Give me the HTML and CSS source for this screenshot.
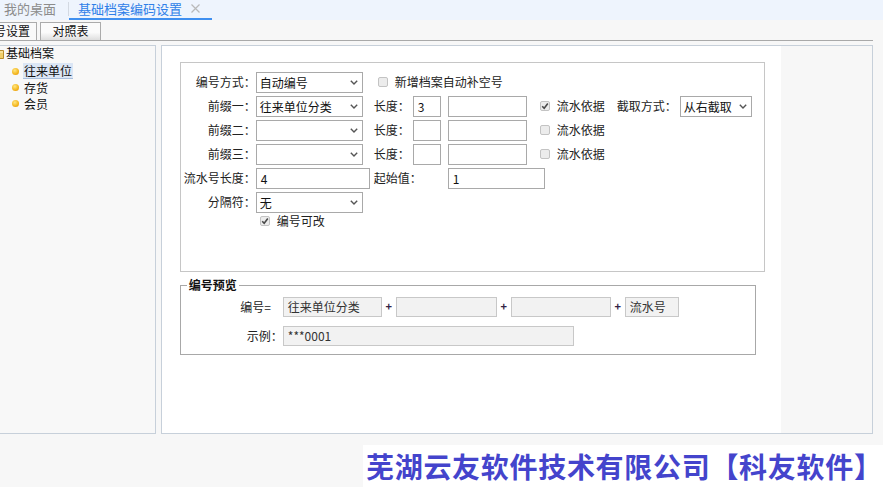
FILE: index.html
```html
<!DOCTYPE html>
<html lang="zh-CN">
<head>
<meta charset="utf-8">
<title>基础档案编码设置</title>
<link rel="stylesheet" href="styles.css">
</head>
<body>
<header class="topbar">
  <div class="tab-home">我的桌面</div>
  <div class="tab-sep"></div>
  <div class="tab-active">
    <span>基础档案编码设置</span>
    <svg class="close" width="9" height="9" viewBox="0 0 9 9"><path d="M0.5 0.5L8.5 8.5M8.5 0.5L0.5 8.5" stroke="#b9b9b9" stroke-width="1.2" fill="none"/></svg>
  </div>
</header>

<div class="app">
  <nav class="subtabs">
    <div class="subtab current">编号设置</div>
    <div class="subtab">对照表</div>
  </nav>

  <div class="main">
    <aside class="tree">
      <div class="node root">
        <svg width="14" height="12" viewBox="0 0 14 12"><path d="M0.5 2.5V11.5H13.5V3.5H6.5L5 1.5H1.5Z" fill="#f1cf6a" stroke="#b88d2c"/><path d="M1 5H13" stroke="#fff3c4"/></svg>
        <span>基础档案</span>
      </div>
      <div class="node leaf"><i class="dot"></i><span class="label selected">往来单位</span></div>
      <div class="node leaf"><i class="dot"></i><span class="label">存货</span></div>
      <div class="node leaf"><i class="dot"></i><span class="label">会员</span></div>
    </aside>

    <section class="content">
      <div class="form-area">
        <div class="group">
          <!-- row 1 -->
          <div class="lbl">编号方式：</div>
          <div class="select w107"><span>自动编号</span><svg width="8" height="5" viewBox="0 0 8 5"><path d="M0.8 0.8L4 4L7.2 0.8" stroke="#555" stroke-width="1.4" fill="none"/></svg></div>
          <div class="check span-rest"><span class="cb"></span><span>新增档案自动补空号</span></div>

          <!-- row 2 -->
          <div class="lbl">前缀一：</div>
          <div class="select w107"><span>往来单位分类</span><svg width="8" height="5" viewBox="0 0 8 5"><path d="M0.8 0.8L4 4L7.2 0.8" stroke="#555" stroke-width="1.4" fill="none"/></svg></div>
          <div class="lbl2">长度：</div>
          <div class="field w28">3</div>
          <div class="field w79"></div>
          <div class="check"><span class="cb on"><svg width="8" height="8" viewBox="0 0 8 8"><path d="M1.2 4.2L3.2 6.2L6.8 1.6" stroke="#4a4a4a" stroke-width="1.6" fill="none"/></svg></span><span>流水依据</span></div>
          <div class="lbl3">截取方式：</div>
          <div class="select w72"><span>从右截取</span><svg width="8" height="5" viewBox="0 0 8 5"><path d="M0.8 0.8L4 4L7.2 0.8" stroke="#555" stroke-width="1.4" fill="none"/></svg></div>

          <!-- row 3 -->
          <div class="lbl">前缀二：</div>
          <div class="select w107"><span></span><svg width="8" height="5" viewBox="0 0 8 5"><path d="M0.8 0.8L4 4L7.2 0.8" stroke="#555" stroke-width="1.4" fill="none"/></svg></div>
          <div class="lbl2">长度：</div>
          <div class="field w28"></div>
          <div class="field w79"></div>
          <div class="check span-end"><span class="cb"></span><span>流水依据</span></div>

          <!-- row 4 -->
          <div class="lbl">前缀三：</div>
          <div class="select w107"><span></span><svg width="8" height="5" viewBox="0 0 8 5"><path d="M0.8 0.8L4 4L7.2 0.8" stroke="#555" stroke-width="1.4" fill="none"/></svg></div>
          <div class="lbl2">长度：</div>
          <div class="field w28"></div>
          <div class="field w79"></div>
          <div class="check span-end"><span class="cb"></span><span>流水依据</span></div>

          <!-- row 5 -->
          <div class="lbl">流水号长度：</div>
          <div class="field w114">4</div>
          <div class="lbl2 span2">起始值：</div>
          <div class="field w97 span-end">1</div>

          <!-- row 6 -->
          <div class="lbl">分隔符：</div>
          <div class="select w107 span-end-left"><span>无</span><svg width="8" height="5" viewBox="0 0 8 5"><path d="M0.8 0.8L4 4L7.2 0.8" stroke="#555" stroke-width="1.4" fill="none"/></svg></div>

          <!-- row 7 -->
          <div class="check last"><span class="cb on"><svg width="8" height="8" viewBox="0 0 8 8"><path d="M1.2 4.2L3.2 6.2L6.8 1.6" stroke="#4a4a4a" stroke-width="1.6" fill="none"/></svg></span><span>编号可改</span></div>
        </div>

        <fieldset class="preview">
          <legend>编号预览</legend>
          <div class="prow">
            <div class="plabel eq">编号=</div>
            <div class="pbox w99">往来单位分类</div>
            <div class="plus">+</div>
            <div class="pbox w101"></div>
            <div class="plus">+</div>
            <div class="pbox w100"></div>
            <div class="plus">+</div>
            <div class="pbox w54">流水号</div>
          </div>
          <div class="prow">
            <div class="plabel">示例：</div>
            <div class="pbox w291">***0001</div>
          </div>
        </fieldset>
      </div>
      <div class="content-side"></div>
    </section>
  </div>
</div>

<footer class="footer">
  <div class="banner">芜湖云友软件技术有限公司【科友软件】</div>
</footer>
</body>
</html>
```

FILE: styles.css
```css
* { box-sizing: border-box; }

html, body {
  margin: 0;
  padding: 0;
}

body {
  width: 883px;
  height: 487px;
  overflow: hidden;
  background: #f7f7f7;
  color: #222;
  font-family: "Noto Sans CJK SC", "Noto Sans", sans-serif;
  font-size: 12px;
  line-height: 1.2;
}

/* top tab bar */
.topbar {
  height: 20px;
  background: #eef4fd;
  display: flex;
  align-items: stretch;
  font-size: 13px;
}
.tab-home {
  width: 68px;
  padding-left: 4px;
  line-height: 18px;
  color: #8c8c8c;
}
.tab-sep {
  width: 1px;
  margin: 2px 0 4px;
  background: #d3d9e2;
}
.tab-active {
  display: flex;
  align-items: center;
  gap: 9px;
  padding: 0 12px 0 9px;
  height: 20px;
  border-bottom: 2px solid #3f8ff0;
  color: #2f7fe8;
  line-height: 18px;
}
.tab-active .close { margin-top: -1px; }

/* shifted working area (window scrolled slightly to the right) */
.app {
  margin-left: -25px;
  width: 898px;
}

.subtabs {
  display: flex;
  gap: 3px;
  height: 21px;
  padding-top: 2px;
  border-bottom: 1px solid #a9a9a9;
}
.subtab {
  height: 18px;
  border: 1px solid #ababab;
  border-bottom: none;
  text-align: center;
  line-height: 16px;
  color: #111;
  width: 61px;
  background: linear-gradient(#fbfbfb 55%, #dedede);
}
.subtab.current {
  width: 62px;
  background: #f9f9f9;
}

.main {
  display: flex;
  height: 389px;
  margin-top: 4px;
}

/* tree */
.tree {
  width: 181px;
  height: 100%;
  border: 1px solid #c7d0da;
  background: #f8f8f8;
  color: #111;
}
.node {
  display: flex;
  align-items: center;
  height: 16px;
  white-space: nowrap;
}
.root {
  height: 14px;
  padding-left: 14px;
  gap: 2px;
}
.leaf { padding-left: 36px; }
.root + .leaf { margin-top: 3px; }
.dot {
  width: 7px;
  height: 7px;
  border-radius: 50%;
  background: radial-gradient(circle at 40% 35%, #ffe680, #f3b51c 60%, #e08a0c);
  margin-right: 4px;
}
.label {
  padding: 0 1px;
  line-height: 15px;
}
.label.selected {
  background: #dbe6f5;
  border-bottom: 1px solid #a9bfdc;
}

/* main content */
.content {
  display: flex;
  width: 713px;
  height: 100%;
  margin-left: 5px;
  border: 1px solid #c7d0da;
  background: #f7f7f7;
}
.form-area {
  width: 619px;
  height: 100%;
  background: #fff;
  padding: 16px 0 0 18px;
}
.content-side { flex: 1; }

.group {
  width: 585px;
  height: 210px;
  border: 1px solid #c6c6c6;
  padding-top: 7px;
  display: grid;
  grid-template-columns: 75px 118px 39px 35px 88px 78px 66px 72px;
  grid-auto-rows: 24px;
  align-items: center;
  align-content: start;
}
.lbl {
  grid-column: 1;
  text-align: right;
  white-space: nowrap;
}
.lbl2 { white-space: nowrap; }
.lbl3 {
  text-align: right;
  padding-right: 3px;
  white-space: nowrap;
}

.select, .field {
  height: 21px;
  border: 1px solid #a9a9a9;
  background: #fff;
  line-height: 19px;
  color: #111;
  white-space: nowrap;
}
.select {
  display: flex;
  align-items: center;
  justify-content: space-between;
  padding: 0 3px 0 3px;
}
.select svg { flex: none; margin-right: 1px; }
.field { padding: 0 4px; }

.w28 { width: 28px; }
.w72 { width: 72px; }
.w79 { width: 79px; }
.w97 { width: 97px; }
.w107 { width: 107px; }
.w114 { width: 114px; }

.span2 { grid-column: span 2; }
.span-rest { grid-column: 3 / -1; }
.span-end { grid-column: span 3; justify-self: start; }
.span-end-left { grid-column: 2 / -1; }

.check {
  display: flex;
  align-items: center;
  gap: 7px;
  padding-left: 4px;
  white-space: nowrap;
}
.check.last {
  grid-column: 2 / -1;
  align-self: start;
  margin-top: 0;
  height: 14px;
}
.cb {
  display: flex;
  align-items: center;
  justify-content: center;
  width: 10px;
  height: 10px;
  border: 1px solid #c3c3c3;
  border-radius: 2px;
  background: #ececec;
}

/* preview */
.preview {
  width: 576px;
  margin: 6px 0 0 0;
  padding: 5px 0 8px 0;
  border: 1px solid #a8a8a8;
}
.preview legend {
  margin-left: 6px;
  padding: 0 2px;
  font-weight: bold;
  line-height: 14px;
  color: #111;
}
.prow {
  display: flex;
  align-items: center;
  height: 20px;
}
.prow + .prow { margin-top: 9px; }
.plabel {
  width: 102px;
  text-align: right;
}
.plabel.eq { padding-right: 12px; }
.pbox {
  height: 20px;
  border: 1px solid #c8c8c8;
  background: #f2f2f2;
  padding-left: 4px;
  line-height: 18px;
  color: #333;
  white-space: nowrap;
}
.plus {
  width: 14px;
  text-align: center;
  font-weight: bold;
  font-size: 11px;
  color: #332244;
}
.w54 { width: 54px; }
.w99 { width: 99px; }
.w100 { width: 100px; }
.w101 { width: 101px; }
.w291 { width: 291px; }

/* footer banner */
.footer {
  display: flex;
  justify-content: flex-end;
  padding-top: 11px;
}
.banner {
  width: 520px;
  height: 42px;
  background: #fff;
  padding-left: 3px;
  color: #4444cc;
  font-size: 28px;
  font-weight: bold;
  line-height: 42px;
  letter-spacing: 0.7px;
  white-space: nowrap;
  overflow: hidden;
}
```
